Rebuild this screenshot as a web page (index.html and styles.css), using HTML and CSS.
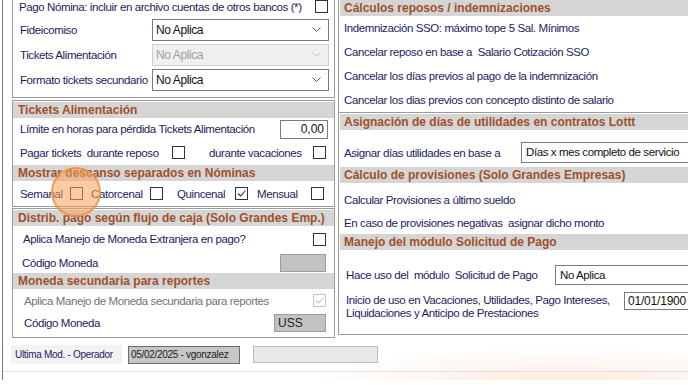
FILE: index.html
```html
<!DOCTYPE html>
<html lang="es">
<head>
  <meta charset="UTF-8">
  <title>Parámetros de Nómina</title>
  <link rel="stylesheet" href="styles.css">
</head>
<body>
<div class="window">
  <div class="columns">
    <div class="col-left">

      <div class="box box-a">
        <div class="row r-first">
          <span class="lbl">Pago Nómina: incluir en archivo cuentas de otros bancos (*)</span>
          <span class="chk"></span>
        </div>
        <div class="row r-combo">
          <span class="lbl lbl-combo">Fideicomiso</span>
          <div class="combo"><span>No Aplica</span><svg width="9" height="5" viewBox="0 0 9 5"><path d="M0.5 0.5 L4.5 4.5 L8.5 0.5" fill="none" stroke="#5a5a5a"/></svg></div>
        </div>
        <div class="row r-combo">
          <span class="lbl lbl-combo">Tickets Alimentación</span>
          <div class="combo disabled"><span>No Aplica</span><svg width="9" height="5" viewBox="0 0 9 5"><path d="M0.5 0.5 L4.5 4.5 L8.5 0.5" fill="none" stroke="#b8b8b8"/></svg></div>
        </div>
        <div class="row r-combo">
          <span class="lbl lbl-combo">Formato tickets secundario</span>
          <div class="combo"><span>No Aplica</span><svg width="9" height="5" viewBox="0 0 9 5"><path d="M0.5 0.5 L4.5 4.5 L8.5 0.5" fill="none" stroke="#5a5a5a"/></svg></div>
        </div>
      </div>

      <div class="box box-b">
        <div class="head">Tickets Alimentación</div>
        <div class="row r-limite">
          <span class="lbl">Límite en horas para pérdida Tickets Alimentación</span>
          <span class="num">0,00</span>
        </div>
        <div class="row r-pagar">
          <span class="lbl lbl-reposo">Pagar tickets&nbsp; durante reposo</span>
          <span class="chk"></span>
          <span class="lbl lbl-vac">durante vacaciones</span>
          <span class="chk"></span>
        </div>
        <div class="head">Mostrar descanso separados en Nóminas</div>
        <div class="row r-periodos">
          <span class="lbl">Semanal</span><span class="chk"></span>
          <span class="lbl">Catorcenal</span><span class="chk"></span>
          <span class="lbl">Quincenal</span><span class="chk checked"><svg width="11" height="11" viewBox="0 0 11 11"><path d="M2 5.5 L4.5 8 L9.5 2.5" fill="none" stroke="#333" stroke-width="1.1"/></svg></span>
          <span class="lbl">Mensual</span><span class="chk"></span>
        </div>
      </div>

      <div class="box box-c">
        <div class="head">Distrib. pago según flujo de caja (Solo Grandes Emp.)</div>
        <div class="row r-aplica">
          <span class="lbl">Aplica Manejo de Moneda Extranjera en pago?</span>
          <span class="chk"></span>
        </div>
        <div class="row r-codigo">
          <span class="lbl">Código Moneda</span>
          <span class="code"></span>
        </div>
        <div class="head">Moneda secundaria para reportes</div>
        <div class="row r-aplica2">
          <span class="lbl muted">Aplica Manejo de Moneda secundaria para reportes</span>
          <span class="chk chk-off"><svg width="11" height="11" viewBox="0 0 11 11"><path d="M2 5.5 L4.5 8 L9.5 2.5" fill="none" stroke="#c4c4c4" stroke-width="1.1"/></svg></span>
        </div>
        <div class="row r-codigo2">
          <span class="lbl">Código Moneda</span>
          <span class="code code-uss">USS</span>
        </div>
      </div>

    </div>

    <div class="col-right">
      <div class="box box-r1">
        <div class="head">Cálculos reposos / indemnizaciones</div>
        <div class="row r-text">Indemnización SSO: máximo tope 5 Sal. Mínimos</div>
        <div class="row r-text">Cancelar reposo en base a&nbsp; Salario Cotización SSO</div>
        <div class="row r-text">Cancelar los días previos al pago de la indemnización</div>
        <div class="row r-text">Cancelar los dias previos con concepto distinto de salario</div>
      </div>

      <div class="box box-r2">
        <div class="head">Asignación de días de utilidades en contratos Lottt</div>
        <div class="row r-asignar">
          <span class="lbl lbl-asignar">Asignar días utilidades en base a</span>
          <span class="field">Días x mes completo de servicio</span>
        </div>
        <div class="head">Cálculo de provisiones (Solo Grandes Empresas)</div>
        <div class="row r-prov1">Calcular Provisiones a último sueldo</div>
        <div class="row r-prov2">En caso de provisiones negativas&nbsp; asignar dicho monto</div>
        <div class="head">Manejo del módulo Solicitud de Pago</div>
        <div class="row r-hace">
          <span class="lbl lbl-hace">Hace uso del&nbsp; módulo&nbsp; Solicitud de Pago</span>
          <span class="field">No Aplica</span>
        </div>
        <div class="row r-inicio">
          <span class="lbl lbl-inicio">Inicio de uso en Vacaciones, Utilidades, Pago Intereses,<br>Liquidaciones y Anticipo de Prestaciones</span>
          <span class="field field-date">01/01/1900</span>
        </div>
      </div>
    </div>
  </div>

  <div class="footer">
    <span class="foot-lbl">Ultima Mod. - Operador</span>
    <span class="foot-user">05/02/2025 - vgonzalez</span>
    <span class="foot-empty"></span>
  </div>
</div>

<div class="click-mark"></div>
</body>
</html>
```

FILE: styles.css
```css
body {
  margin: 0;
  width: 688px;
  height: 385px;
  overflow: hidden;
  background: #fff;
  font-family: "Liberation Sans", Arial, sans-serif;
  font-size: 11.5px;
  letter-spacing: -0.4px;
  color: #1c1c60;
  position: relative;
}

.window {
  margin-left: 2px;
  height: 385px;
  border-left: 1px solid #7c7c7c;
  background: radial-gradient(ellipse 260px 40px at 560px 392px, #fde9dc, rgba(255,255,255,0) 100%);
}

.columns {
  display: flex;
  margin-top: -5px;
  padding-left: 9px;
}

.col-left {
  width: 323px;
  margin-right: 3px;
  flex-shrink: 0;
}

.col-right {
  width: 400px;
  flex-shrink: 0;
}

.box {
  border: 1px solid #9a9a9a;
  box-sizing: border-box;
}

.head {
  height: 16px;
  line-height: 16px;
  background: #d5d5d5;
  color: #a0502a;
  font-size: 12px;
  font-weight: bold;
  letter-spacing: 0;
  padding-left: 5px;
  white-space: nowrap;
}

.row {
  display: flex;
  align-items: center;
  white-space: nowrap;
}

.lbl {
  flex-shrink: 0;
}

.muted {
  color: #727272;
}

/* checkbox */
.chk {
  width: 13px;
  height: 13px;
  box-sizing: border-box;
  border: 1px solid #333;
  background: #fff;
  flex-shrink: 0;
  display: flex;
  align-items: center;
  justify-content: center;
}

.chk-off {
  border-color: #c4c4c4;
}

/* combos */
.combo {
  width: 177px;
  height: 22px;
  box-sizing: border-box;
  border: 1px solid #7a7a7a;
  background: #fff;
  display: flex;
  align-items: center;
  justify-content: space-between;
  padding: 0 7px 0 3px;
  color: #111;
  font-size: 12px;
  letter-spacing: -0.4px;
}

.combo.disabled {
  border-color: #cfcfcf;
  background: #f0f0f0;
  color: #a0a0a0;
}

.field {
  height: 21px;
  line-height: 19px;
  box-sizing: border-box;
  border: 1px solid #7a7a7a;
  border-right: none;
  background: #fff;
  color: #111;
  padding-left: 4px;
  flex: 1;
}

/* left column */
.box-a {
  padding-bottom: 5px;
}

.r-first {
  height: 21px;
  justify-content: space-between;
  padding: 0 6px 0 6px;
}

.r-combo {
  height: 25px;
  padding-left: 7px;
}

.lbl-combo {
  width: 132px;
}

.box-b {
  margin-top: 2px;
  padding-top: 1px;
}

.r-limite {
  height: 22px;
  justify-content: space-between;
  padding: 0 6px 0 7px;
}

.num {
  width: 48px;
  height: 19px;
  line-height: 17px;
  box-sizing: border-box;
  border: 1px solid #7a7a7a;
  text-align: right;
  padding-right: 3px;
  color: #111;
  font-size: 12px;
  letter-spacing: 0;
}

.r-pagar {
  height: 25px;
  padding: 0 8px 0 7px;
}

.lbl-reposo {
  width: 152px;
}

.lbl-vac {
  margin-left: 24px;
  flex: 1;
}

.r-periodos {
  height: 25px;
  padding-left: 7px;
  display: grid;
  grid-template-columns: 50px 21px 59px 27px 58px 22px 54px 13px;
}

.box-c {
  margin-top: 1px;
  padding-top: 1px;
  padding-bottom: 3px;
}

.r-aplica {
  height: 26px;
  justify-content: space-between;
  padding: 0 8px 0 10px;
}

.r-codigo {
  height: 21px;
  justify-content: space-between;
  padding: 0 8px 0 9px;
}

.r-aplica2 {
  height: 23px;
  justify-content: space-between;
  padding: 0 8px 0 11px;
}

.r-codigo2 {
  height: 22px;
  justify-content: space-between;
  padding: 0 8px 0 11px;
}

.code {
  width: 46px;
  height: 18px;
  line-height: 16px;
  box-sizing: border-box;
  border: 1px solid #9d9d9d;
  background: #c3c3c3;
  color: #222;
  padding-left: 3px;
  font-size: 12px;
  letter-spacing: 0;
}

.code-uss {
  width: 52px;
}

/* right column */
.box-r1 {
  padding: 4px 0 0 1px;
}

.box-r1 .head,
.box-r2 .head {
  padding-left: 4px;
}

.r-text {
  height: 24px;
  padding-left: 4px;
}

.box-r2 {
  border-top: none;
  padding: 1px 0 4px 1px;
}

.r-asignar {
  height: 21px;
  margin: 12px 0 4px;
  padding-left: 4px;
}

.lbl-asignar {
  width: 177px;
}

.r-prov1 {
  height: 24px;
  margin-top: 5px;
  padding-left: 4px;
}

.r-prov2 {
  height: 22px;
  padding-left: 4px;
}

.r-hace {
  height: 20px;
  margin-top: 15px;
  padding-left: 6px;
}

.r-hace .field {
  height: 20px;
  line-height: 18px;
}

.lbl-hace {
  width: 209px;
}

.r-inicio {
  align-items: flex-start;
  margin-top: 7px;
  height: 38px;
  padding-left: 6px;
}

.lbl-inicio {
  width: 278px;
  line-height: 13px;
  padding-top: 2px;
}

.field-date {
  height: 18px;
  line-height: 16px;
  padding-left: 3px;
  font-size: 12px;
  letter-spacing: -0.2px;
}

/* footer */
.footer {
  display: flex;
  align-items: center;
  height: 33px;
  border-bottom: 1px solid #e2e2e2;
  padding-left: 8px;
  font-size: 10px;
  letter-spacing: -0.3px;
  white-space: nowrap;
}

.foot-lbl {
  width: 107px;
  height: 19px;
  line-height: 19px;
  background: #f2f2f2;
  padding-left: 4px;
}

.foot-user {
  width: 112px;
  height: 18px;
  line-height: 15px;
  box-sizing: border-box;
  margin-left: 6px;
  border: 1px solid #6a6a6a;
  background: #c6c6c6;
  color: #222;
  padding-left: 2px;
}

.foot-empty {
  width: 125px;
  height: 17px;
  box-sizing: border-box;
  margin-left: 13px;
  border: 1px solid #bdbdbd;
  background: #e8e8e8;
}

/* click highlight over the Semanal checkbox */
.click-mark {
  position: absolute;
  left: 51px;
  top: 167px;
  width: 50px;
  height: 50px;
  box-sizing: border-box;
  border-radius: 50%;
  border: 2px solid rgba(238, 140, 60, 0.75);
  background: rgba(245, 160, 90, 0.55);
}
```
